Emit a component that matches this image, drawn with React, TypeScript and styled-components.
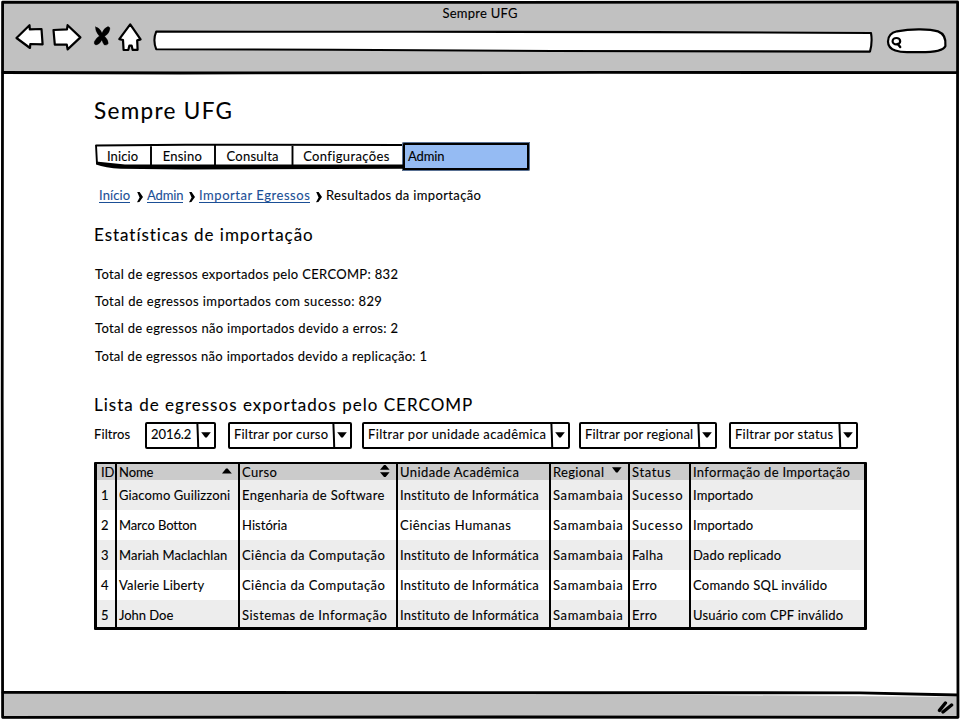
import React, { useLayoutEffect, useRef, useState } from "react";
import styled, { createGlobalStyle } from "styled-components";

const INK = "#000";
const CHROME = "#c1c1c1";

const GlobalStyle = createGlobalStyle`
  * { box-sizing: border-box; }
  html, body { margin: 0; padding: 0; background: #fff; }
  body { font-family: Lato, "Open Sans", sans-serif; font-size: 13px; color: ${INK}; overflow: hidden; }
`;

/* ---------- text tracked out to a given measure ---------- */

const Tracked = styled.span<{ $width: number }>`
  display: block;
  flex: none;
  width: ${(p) => p.$width}px;
  white-space: nowrap;
  -webkit-text-stroke: 0.1px currentColor;
`;

function Label({ width, children }: { width: number; children: string }) {
  const ref = useRef<HTMLSpanElement>(null);
  const [tracking, setTracking] = useState(0);
  useLayoutEffect(() => {
    const el = ref.current;
    if (!el) return;
    const range = document.createRange();
    range.selectNodeContents(el);
    const natural = range.getBoundingClientRect().width - tracking * children.length;
    setTracking((width + 0.3 - natural) / children.length);
  }, [width, children]);
  return (
    <Tracked ref={ref} $width={width} style={{ letterSpacing: `${tracking}px` }}>
      {children}
    </Tracked>
  );
}

/* ---------- browser window ---------- */

const Page = styled.div`
  width: 960px;
  height: 720px;
  padding: 1px;
  overflow: hidden;
`;

const Window = styled.div`
  position: relative;
  display: flex;
  flex-direction: column;
  width: 958px;
  height: 718px;
`;

const Sketch = styled.svg`
  position: absolute;
  left: -1px;
  top: -1px;
  pointer-events: none;
  fill: none;
  stroke: ${INK};
  stroke-width: 2.8;
  stroke-linejoin: round;
  stroke-linecap: round;
`;

const Chrome = styled.header`
  height: 72px;
  margin: 0 1px;
  background: ${CHROME};
`;

const WindowTitle = styled.div`
  display: flex;
  justify-content: center;
  height: 24px;
  line-height: 24px;
`;

const Toolbar = styled.div`
  display: flex;
  align-items: flex-start;
  height: 34px;
  padding-left: 13px;
`;

const Icon = styled.svg<{ $gap?: number }>`
  display: block;
  flex: none;
  margin-left: ${(p) => p.$gap ?? 0}px;
  overflow: visible;
  fill: #fff;
  stroke: ${INK};
  stroke-width: 2.2;
  stroke-linejoin: round;
  stroke-linecap: round;
`;

const Content = styled.main`
  flex: 1;
  display: flex;
  flex-direction: column;
  align-items: flex-start;
  padding: 22px 0 0 93px;
`;

const Title = styled.h1`
  margin: 0;
  font-size: 22.5px;
  font-weight: 400;
  line-height: 32px;
`;

const Section = styled.h2<{ $top: number }>`
  margin: ${(p) => p.$top}px 0 0;
  font-size: 17px;
  font-weight: 400;
  line-height: 24px;
`;

const Footer = styled.footer`
  display: flex;
  justify-content: flex-end;
  align-items: flex-start;
  height: 26px;
  padding: 7px 3px 0 0;
  margin: 0 1px;
  background: ${CHROME};
  clip-path: polygon(0 0, 50% 0, 100% 4px, 100% 100%, 0 100%);
`;

/* ---------- menu ---------- */

const Menu = styled.nav`
  display: flex;
  align-items: flex-start;
  margin-top: 15px;
  margin-left: 1px;
`;

const MenuBar = styled.div`
  position: relative;
  display: flex;
  width: 307px;
  height: 28px;
  padding-top: 3px;
`;

const MenuOutline = styled.svg`
  position: absolute;
  left: 0;
  top: 0;
  overflow: visible;
`;

const MenuItem = styled.a<{ $width: number }>`
  display: flex;
  justify-content: center;
  width: ${(p) => p.$width}px;
  line-height: 22px;
`;

const ActiveItem = styled.a`
  width: 128px;
  height: 29px;
  padding-left: 3px;
  border: 3px solid ${INK};
  border-radius: 2px 1px 2px 1px;
  outline: 1px solid rgba(149, 187, 243, 0.6);
  outline-offset: -1px;
  background: #95bbf3;
  line-height: 22px;
`;

const Crumbs = styled.div`
  display: flex;
  align-items: flex-start;
  height: 18px;
  margin: 15px 0 0 5px;
`;

const Crumb = styled.a`
  height: 17px;
  line-height: 18px;
  color: #1b4f96;
  border-bottom: 1px solid #1b4f96;
`;

const Here = styled.span`
  line-height: 18px;
`;

const Chevron = styled.svg<{ $left: number; $right: number }>`
  flex: none;
  margin: 5px ${(p) => p.$right}px 0 ${(p) => p.$left}px;
  fill: ${INK};
`;

const Stats = styled.div`
  display: grid;
  grid-template-rows: 27px 27px 28px 27px;
  margin: 14px 0 0 1px;
  line-height: 27px;
`;

/* ---------- filters ---------- */

const Filters = styled.div`
  display: flex;
  align-items: flex-start;
  margin-top: 5px;
`;

const FilterTitle = styled.div`
  width: 51px;
  line-height: 24px;
`;

const Select = styled.div<{ $width: number; $gap: number }>`
  display: flex;
  justify-content: space-between;
  width: ${(p) => p.$width}px;
  height: 27px;
  margin-right: ${(p) => p.$gap}px;
  padding-left: 4px;
  border: 2px solid ${INK};
  border-radius: 2px;
  line-height: 20px;
`;

const Arrow = styled.svg`
  display: block;
  flex: none;
  overflow: visible;
`;

/* ---------- table ---------- */

const Table = styled.div`
  display: flex;
  flex-direction: column;
  width: 773px;
  height: 168px;
  margin-top: 13px;
  border: 3px solid ${INK};
  border-top-width: 2.5px;
  border-radius: 1px;
`;

const Row = styled.div<{ $kind: "head" | "odd" | "even" | "last" }>`
  display: grid;
  grid-template-columns: 20px 123px 158px 153px 79px 61px 173px;
  height: ${(p) => (p.$kind === "head" ? 16 : p.$kind === "last" ? 27 : 30)}px;
  line-height: ${(p) => (p.$kind === "head" ? 17 : 30)}px;
  background: ${(p) => (p.$kind === "head" ? "#cbcbcb" : p.$kind === "even" ? "#fff" : "#ededed")};
`;

const Cell = styled.div<{ $first?: boolean; $last?: boolean }>`
  display: flex;
  justify-content: space-between;
  padding-left: ${(p) => (p.$first ? 4 : 2)}px;
  border-right: ${(p) => (p.$last ? 0 : 2)}px solid ${INK};
`;

const Sort = styled.svg<{ $gap: number; $top: number }>`
  flex: none;
  display: block;
  margin: ${(p) => p.$top}px ${(p) => p.$gap}px 0 0;
  fill: ${INK};
`;

type Text = [string, number];

const menu: [string, number, number][] = [
  ["Inicio", 31, 55],
  ["Ensino", 39, 65],
  ["Consulta", 52, 76],
  ["Configurações", 86, 112],
];

const stats: Text[] = [
  ["Total de egressos exportados pelo CERCOMP: 832", 303],
  ["Total de egressos importados com sucesso: 829", 287],
  ["Total de egressos não importados devido a erros: 2", 303],
  ["Total de egressos não importados devido a replicação: 1", 332],
];

const filters: { text: Text; width: number; gap: number }[] = [
  { text: ["2016.2", 40], width: 71, gap: 12 },
  { text: ["Filtrar por curso", 94], width: 124, gap: 10 },
  { text: ["Filtrar por unidade acadêmica", 178], width: 208, gap: 9 },
  { text: ["Filtrar por regional", 108], width: 138, gap: 12 },
  { text: ["Filtrar por status", 98], width: 129, gap: 0 },
];

const head: Text[] = [
  ["ID", 13], ["Nome", 34], ["Curso", 35], ["Unidade Acadêmica", 119],
  ["Regional", 51], ["Status", 39], ["Informação de Importação", 157],
];

const INF: Text = ["Instituto de Informática", 139];
const SAM: Text = ["Samambaia", 70];

const rows: Text[][] = [
  [["1", 7], ["Giacomo Guilizzoni", 111], ["Engenharia de Software", 142], INF, SAM, ["Sucesso", 51], ["Importado", 60]],
  [["2", 7], ["Marco Botton", 77], ["História", 45], ["Ciências Humanas", 111], SAM, ["Sucesso", 51], ["Importado", 60]],
  [["3", 7], ["Mariah Maclachlan", 108], ["Ciência da Computação", 143], INF, SAM, ["Falha", 31], ["Dado replicado", 88]],
  [["4", 7], ["Valerie Liberty", 85], ["Ciência da Computação", 143], INF, SAM, ["Erro", 25], ["Comando SQL inválido", 134]],
  [["5", 7], ["John Doe", 54], ["Sistemas de Informação", 145], INF, SAM, ["Erro", 25], ["Usuário com CPF inválido", 150]],
];

function SortMark({ column }: { column: number }) {
  if (column === 1)
    return <Sort $gap={6} $top={4} width="10" height="6"><path d="M0 5.6 L4 0.4 L5.6 0.6 L9.8 5.6 Z" /></Sort>;
  if (column === 2)
    return <Sort $gap={6} $top={1} width="10" height="13"><path d="M0 4.8 L4 0 L5.6 0 L9.6 4.8 Z M0 7.2 L9.6 7.2 L5.6 12 L4 12 Z" /></Sort>;
  if (column === 4)
    return <Sort $gap={6} $top={3} width="10" height="6"><path d="M0 0.2 L9.6 0.2 L5.6 5.4 L4 5.4 Z" /></Sort>;
  return null;
}

const Separator = ({ left = 7, right = 4 }: { left?: number; right?: number }) => (
  <Chevron $left={left} $right={right} width="6" height="12">
    <path d="M0.2 1 L2.6 1 L6 6 L2.4 11 L0 11.2 L2.6 6.6 Z" />
  </Chevron>
);

export default function App() {
  return (
    <Page>
      <GlobalStyle />
      <Window>
        <Chrome>
          <WindowTitle><Label width={75}>Sempre UFG</Label></WindowTitle>
          <Toolbar>
            <Icon width="28" height="26">
              <path d="M1.5 13 L14.5 0.2 L14.8 4.4 L26.5 4 L27.6 19.4 L15.3 19 L15 23 Z" />
            </Icon>
            <Icon $gap={9} width="28" height="26">
              <path d="M1.5 5 L15 4.4 L15.6 0.2 L28.4 12.4 L15.6 24.4 L14.8 19.6 L2.8 19.6 Z" />
            </Icon>
            <Icon $gap={13} width="17" height="24">
              <path
                d="M2.6 2 Q6.5 2.4 9 8 Q11 3 15 1.6 Q17.8 2.4 16.6 5 Q15.8 9 11.6 11.2 Q15.4 15 15.2 18.6 Q14.4 20.4 11.4 20 Q10 18.4 8.8 15 Q6.6 19.4 3 20 Q0.6 19.6 1.4 16.6 Q3.4 12.6 6.4 11 Q2 6.4 2.6 2 Z"
                fill={INK}
                strokeWidth="0.4"
              />
            </Icon>
            <Icon $gap={8} width="24" height="28">
              <path d="M12.2 -0.6 L22.6 14.4 L19.2 15.4 L19.6 24.8 L14.6 24.8 L13.6 20.6 L11.4 20.6 L10.3 25 L5.6 25 L5 15 L1.3 14.2 Z" />
            </Icon>
            <Icon $gap={11} width="719" height="28">
              <path d="M3.2 6.6 L260 6.8 L500 7.1 L718 8 Q719.6 17 717 26.6 L400 26 L180 24.7 L3.2 24.2 Q-0.4 15 3.2 6.6 Z" strokeWidth="2.1" />
            </Icon>
            <Icon $gap={15} width="60" height="30">
              <path d="M10 6.3 C25 3.4 43 4 51 6.4 C58 9 59 15 58.4 21 C56 27.6 38 27.6 24 27 C13 27.6 1 26 1 16.4 C1 11 5 7.5 10 6.3 Z" />
              <ellipse cx="9.4" cy="16.2" rx="3.8" ry="3.2" />
              <path d="M10.8 19 L13.2 22" strokeWidth="2.4" />
            </Icon>
          </Toolbar>
        </Chrome>

        <Content>
          <Title><Label width={139}>Sempre UFG</Label></Title>
          <Menu>
            <MenuBar>
              <MenuOutline width="308" height="28">
                <path d="M0.5 3.5 L90 2.7 L307 3 M1 3 L2 22 M56 3 V23 M120 3 V23 M197.5 3 V23" fill="none" stroke={INK} strokeWidth="1.9" />
                <path d="M1 19.5 L30 22.4 L308 22.4 V26.8 L90 27.4 L26 26.8 Q10 26 1 22.5 Z" fill={INK} />
              </MenuOutline>
              {menu.map(([name, width, cell]) => (
                <MenuItem key={name} $width={cell}><Label width={width}>{name}</Label></MenuItem>
              ))}
            </MenuBar>
            <ActiveItem><Label width={36}>Admin</Label></ActiveItem>
          </Menu>
          <Crumbs>
            <Crumb><Label width={31}>Início</Label></Crumb>
            <Separator />
            <Crumb><Label width={36}>Admin</Label></Crumb>
            <Separator left={6} />
            <Crumb><Label width={111}>Importar Egressos</Label></Crumb>
            <Separator left={6} />
            <Here><Label width={155}>Resultados da importação</Label></Here>
          </Crumbs>

          <Section $top={19}><Label width={220}>Estatísticas de importação</Label></Section>
          <Stats>
            {stats.map(([text, width]) => <Label key={text} width={width}>{text}</Label>)}
          </Stats>

          <Section $top={23}><Label width={379}>Lista de egressos exportados pelo CERCOMP</Label></Section>
          <Filters>
            <FilterTitle><Label width={36}>Filtros</Label></FilterTitle>
            {filters.map(({ text, width, gap }) => (
              <Select key={text[0]} $width={width} $gap={gap}>
                <Label width={text[1]}>{text[0]}</Label>
                <Arrow width="17" height="23">
                  <path d="M0.4 0 L0.8 10 L1.2 23" fill="none" stroke={INK} strokeWidth="2" />
                  <path d="M4.2 8.2 L13.8 8.2 L9.8 13.6 L8.2 13.6 Z" fill={INK} />
                </Arrow>
              </Select>
            ))}
          </Filters>

          <Table>
            <Row $kind="head">
              {head.map(([text, width], i) => (
                <Cell key={text} $first={i === 0} $last={i === 6}>
                  <Label width={width}>{text}</Label>
                  <SortMark column={i} />
                </Cell>
              ))}
            </Row>
            {rows.map((row, r) => (
              <Row key={r} $kind={r === 4 ? "last" : r % 2 ? "even" : "odd"}>
                {row.map(([text, width], i) => (
                  <Cell key={i} $first={i === 0} $last={i === 6}>
                    <Label width={width}>{text}</Label>
                  </Cell>
                ))}
              </Row>
            ))}
          </Table>
        </Content>

        <Footer>
          <svg width="18" height="14">
            <path d="M2.5 10.4 L8.4 3 M6 12 L14.6 5" stroke={INK} strokeWidth="3.4" strokeLinecap="round" />
          </svg>
        </Footer>

        <Sketch width="960" height="720">
          <path d="M2.6 2.2 L480 2.4 L957.6 2 L957.4 360 L958 717.3 L500 717 L2.6 717.3 L2.2 400 Z" />
          <path d="M3 72.5 L180 73 L600 72.4 L957 72.6" />
          <path d="M3 692.4 L480 692.6 L860 692.8 L957 695" />
        </Sketch>
      </Window>
    </Page>
  );
}
